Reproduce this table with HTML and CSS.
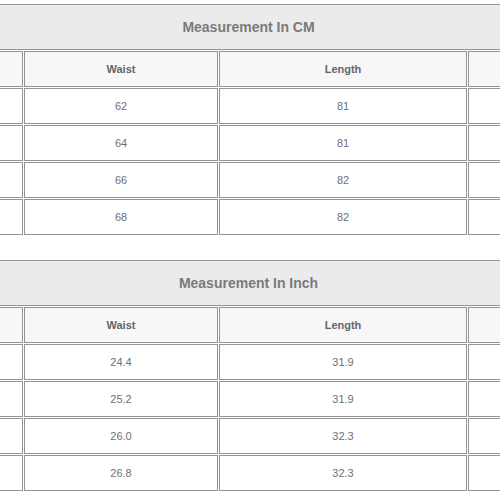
FILE: index.html
```html
<!DOCTYPE html>
<html>
<head>
<meta charset="utf-8">
<link rel="stylesheet" href="styles.css">
</head>
<body>
<div class="page">
  <table class="size-table">
    <colgroup>
      <col class="c-size"><col class="c-waist"><col class="c-length"><col class="c-hip">
    </colgroup>
    <tr><th class="title" colspan="4">Measurement In CM</th></tr>
    <tr class="head"><th></th><th>Waist</th><th>Length</th><th></th></tr>
    <tr><td></td><td>62</td><td>81</td><td></td></tr>
    <tr><td></td><td>64</td><td>81</td><td></td></tr>
    <tr><td></td><td>66</td><td>82</td><td></td></tr>
    <tr><td></td><td>68</td><td>82</td><td></td></tr>
  </table>
  <table class="size-table">
    <colgroup>
      <col class="c-size"><col class="c-waist"><col class="c-length"><col class="c-hip">
    </colgroup>
    <tr><th class="title" colspan="4">Measurement In Inch</th></tr>
    <tr class="head"><th></th><th>Waist</th><th>Length</th><th></th></tr>
    <tr><td></td><td>24.4</td><td>31.9</td><td></td></tr>
    <tr><td></td><td>25.2</td><td>31.9</td><td></td></tr>
    <tr><td></td><td>26.0</td><td>32.3</td><td></td></tr>
    <tr><td></td><td>26.8</td><td>32.3</td><td></td></tr>
  </table>
</div>
</body>
</html>
```
FILE: styles.css
```css
html, body {
  margin: 0;
  padding: 0;
  background: #fff;
  overflow: hidden;
}
.page {
  width: 500px;
  overflow: hidden;
  padding-top: 3px;
}
.size-table {
  margin-left: -128px;
  margin-bottom: 23px;
  border-collapse: separate;
  border-spacing: 1px;
  table-layout: fixed;
  width: 753px;
  font-family: "Liberation Sans", Arial, sans-serif;
  font-size: 11px;
  color: #707070;
}
.c-size { width: 150px; }
.c-waist { width: 194px; }
.c-length { width: 248px; }
.c-hip { width: 156px; }
.size-table th,
.size-table td {
  border: 1px solid #959595;
  text-align: center;
  padding: 10px 4px;
  line-height: 14px;
  height: 14px;
  background: #fff;
}
.size-table .title {
  background: #ebebeb;
  font-size: 14px;
  font-weight: bold;
  color: #7a7a7a;
  line-height: 18px;
  height: 18px;
  padding: 13px 4px 13px;
}
.size-table .head th {
  background: #f7f7f7;
  font-weight: bold;
  color: #666;
}
```
